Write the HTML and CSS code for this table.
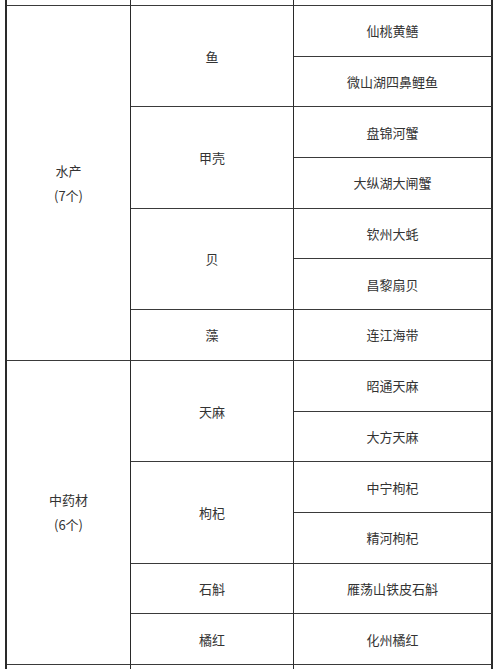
FILE: index.html
```html
<!DOCTYPE html>
<html lang="zh-CN">
<head>
<meta charset="utf-8">
<link rel="stylesheet" href="styles.css">
</head>
<body>
<div class="page">
  <div class="grid">
    <div class="cell c1" style="grid-row: 1 / 2"></div>
    <div class="cell c2" style="grid-row: 1 / 2"></div>
    <div class="cell c3" style="grid-row: 1 / 2"></div>

    <div class="cell c1" style="grid-row: 2 / 9"><div class="cat">水产<br>(7个)</div></div>
    <div class="cell c2" style="grid-row: 2 / 4">鱼</div>
    <div class="cell c3" style="grid-row: 2 / 3">仙桃黄鳝</div>
    <div class="cell c3" style="grid-row: 3 / 4">微山湖四鼻鲤鱼</div>
    <div class="cell c2" style="grid-row: 4 / 6">甲壳</div>
    <div class="cell c3" style="grid-row: 4 / 5">盘锦河蟹</div>
    <div class="cell c3" style="grid-row: 5 / 6">大纵湖大闸蟹</div>
    <div class="cell c2" style="grid-row: 6 / 8">贝</div>
    <div class="cell c3" style="grid-row: 6 / 7">钦州大蚝</div>
    <div class="cell c3" style="grid-row: 7 / 8">昌黎扇贝</div>
    <div class="cell c2" style="grid-row: 8 / 9">藻</div>
    <div class="cell c3" style="grid-row: 8 / 9">连江海带</div>

    <div class="cell c1" style="grid-row: 9 / 15"><div class="cat">中药材<br>(6个)</div></div>
    <div class="cell c2" style="grid-row: 9 / 11">天麻</div>
    <div class="cell c3" style="grid-row: 9 / 10">昭通天麻</div>
    <div class="cell c3" style="grid-row: 10 / 11">大方天麻</div>
    <div class="cell c2" style="grid-row: 11 / 13">枸杞</div>
    <div class="cell c3" style="grid-row: 11 / 12">中宁枸杞</div>
    <div class="cell c3" style="grid-row: 12 / 13">精河枸杞</div>
    <div class="cell c2" style="grid-row: 13 / 14">石斛</div>
    <div class="cell c3" style="grid-row: 13 / 14">雁荡山铁皮石斛</div>
    <div class="cell c2" style="grid-row: 14 / 15">橘红</div>
    <div class="cell c3" style="grid-row: 14 / 15">化州橘红</div>

    <div class="cell c1" style="grid-row: 15 / 16"></div>
    <div class="cell c2" style="grid-row: 15 / 16"></div>
    <div class="cell c3" style="grid-row: 15 / 16"></div>
  </div>
</div>
</body>
</html>
```

FILE: styles.css
```css
html, body {
  margin: 0;
  padding: 0;
  background: #ffffff;
}
.page {
  width: 500px;
  height: 669px;
  overflow: hidden;
}
.grid {
  display: grid;
  grid-template-columns: 124px 163px 199px;
  grid-template-rows: repeat(15, 50.7px);
  margin-top: -44.7px;
  margin-left: 5px;
  width: 486px;
  border-left: 2px solid #2a2a2a;
  font-family: "Noto Sans CJK SC", "Noto Sans", sans-serif;
  font-size: 13px;
  color: #333333;
}
.cell {
  box-sizing: border-box;
  border-right: 1px solid #2a2a2a;
  border-bottom: 1px solid #3a3a3a;
  display: flex;
  align-items: center;
  justify-content: center;
  text-align: center;
}
.c1 { grid-column: 1; }
.c2 { grid-column: 2; }
.c3 { grid-column: 3; border-right-width: 2px; }
.cat {
  line-height: 25px;
}
```
